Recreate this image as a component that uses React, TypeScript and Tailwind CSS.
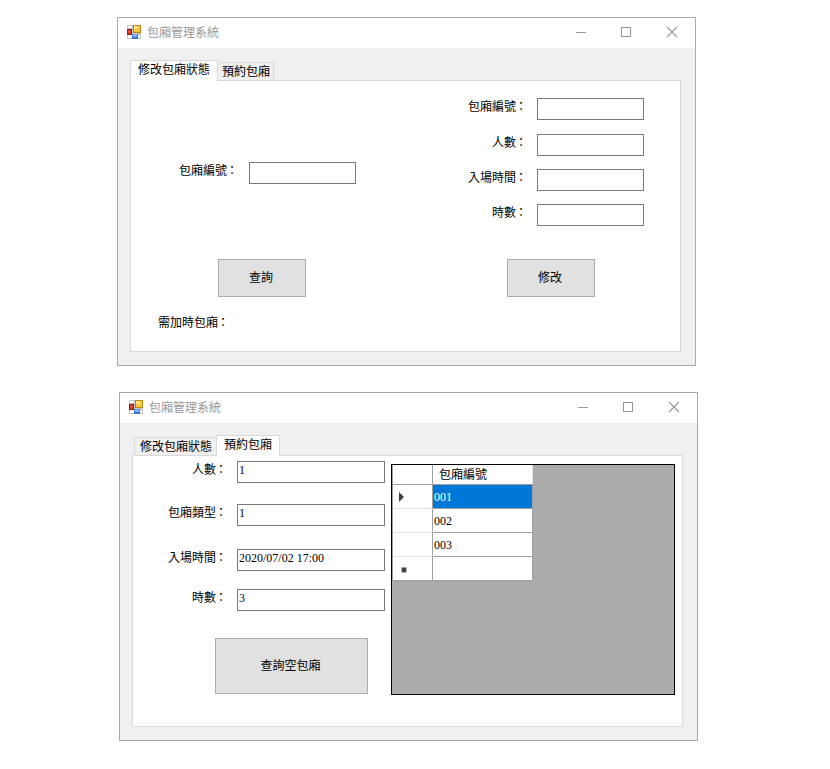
import type { ReactNode } from "react";

function AppIcon() {
  return (
    <svg width="14" height="14" viewBox="0 0 14 14" shapeRendering="crispEdges">
      <rect width="14" height="14" fill="#c4c4c4" />
      <rect x="1" y="1" width="4" height="2" fill="#fff" />
      <rect x="1" y="10" width="4" height="3" fill="#fff" />
      <rect x="11" y="10" width="2" height="3" fill="#fff" />
      <rect x="6" y="0" width="8" height="8" fill="#b9860f" />
      <rect x="7" y="1" width="6" height="6" fill="#f5c73c" />
      <rect x="7" y="1" width="4" height="3" fill="#fde48a" />
      <rect x="0" y="4" width="5" height="6" fill="#a3160e" />
      <rect x="1" y="5" width="3" height="4" fill="#d03a2c" />
      <rect x="2" y="6" width="1" height="1" fill="#f09a8c" />
      <rect x="5" y="9" width="6" height="5" fill="#3f74d4" />
      <rect x="6" y="9" width="4" height="3" fill="#7fb0fa" />
    </svg>
  );
}

function WindowControls() {
  return (
    <svg width="102" height="12" viewBox="0 0 102 12" fill="none" stroke="#999999">
      <path d="M0 6.5h10" />
      <rect x="45.5" y="1.5" width="9" height="9" />
      <path d="M91 1l10 10M101 1l-10 10" strokeWidth="1.1" />
    </svg>
  );
}

function FormWindow({ children }: { children: ReactNode }) {
  return (
    <section className="flex h-[349px] w-[579px] flex-col border border-[#aaaaaa] bg-[#f0f0f0]">
      <header className="flex h-[30px] shrink-0 items-start justify-between bg-white pl-[9px] pr-[17px]">
        <div className="flex gap-1.5 pt-[7px]">
          <AppIcon />
          <h1 className="pt-0.5 text-[12px] leading-[12px] text-[#999999]">包廂管理系統</h1>
        </div>
        <div className="pt-2">
          <WindowControls />
        </div>
      </header>
      <div className="px-3 pt-3">{children}</div>
    </section>
  );
}

function Caption({ children }: { children: string }) {
  return (
    <span className="flex text-[12px] leading-[12px]">
      <span>{children}</span>
      <span className="-ml-px mr-px">：</span>
    </span>
  );
}

function Field({ label, value = "", gap = "gap-[9px]", width }: { label: string; value?: string; gap?: string; width: string }) {
  return (
    <label className={`flex h-[22px] justify-end pt-[3px] ${gap}`}>
      <Caption>{label}</Caption>
      <input
        defaultValue={value}
        className={`-mt-[3px] h-[22px] border border-[#7a7a7a] bg-white pb-1 pl-px text-[12px] leading-[16px] outline-none ${width}`}
      />
    </label>
  );
}

function PushButton({ children, size }: { children: string; size: string }) {
  return (
    <button className={`flex items-center justify-center border border-[#adadad] bg-[#e1e1e1] pr-0.5 text-[12px] leading-[12px] ${size}`}>
      {children}
    </button>
  );
}

function EditWindow() {
  return (
    <FormWindow>
      <nav className="flex h-5 items-end text-[12px] leading-[12px]">
        <div className="relative -mb-px h-[21px] w-[88px] border border-b-0 border-[#d9d9d9] bg-white pl-[7px] pt-[3px]">修改包廂狀態</div>
        <div className="h-[18px] w-14 border border-b-0 border-l-0 border-[#d9d9d9] pl-1 pt-[3px]">預約包廂</div>
      </nav>
      <div className="flex h-[272px] w-[551px] border border-[#d9d9d9] bg-white">
        <div className="w-[225px] pt-[81px]">
          <Field label="包廂編號" gap="gap-2.5" width="w-[107px]" />
          <div className="pl-[87px] pt-[75px]">
            <PushButton size="h-[38px] w-[88px]">查詢</PushButton>
          </div>
          <div className="pl-[27px] pt-5">
            <Caption>需加時包廂</Caption>
          </div>
        </div>
        <div className="w-[288px] pt-[17px]">
          <Field label="包廂編號" width="w-[107px]" />
          <div className="flex flex-col gap-[13px] pt-[14px]">
            <Field label="人數" width="w-[107px]" />
            <Field label="入場時間" width="w-[107px]" />
            <Field label="時數" width="w-[107px]" />
          </div>
          <div className="flex justify-end pr-[49px] pt-[33px]">
            <PushButton size="h-[38px] w-[88px]">修改</PushButton>
          </div>
        </div>
      </div>
    </FormWindow>
  );
}

function RoomGrid() {
  const rooms = ["001", "002", "003", ""];
  return (
    <div className="h-[231px] w-[284px] border border-black bg-[#ababab]">
      <div className="w-[141px] border-l border-[#a0a0a0]">
        <div className="flex h-5 border-b border-[#a0a0a0] bg-white">
          <div className="w-10 border-r border-[#a0a0a0]" />
          <div className="w-[100px] border-r border-[#e5e5e5] pl-1.5 pt-1 text-[12px] leading-[12px]">包廂編號</div>
        </div>
        {rooms.map((room, i) => (
          <div key={i} className="flex h-6">
            <div className={`flex w-10 items-center border-b border-r border-r-[#a0a0a0] bg-white ${i === 3 ? "border-b-[#a0a0a0]" : "border-b-[#e3e3e3]"}`}>
              {i === 0 && (
                <svg className="ml-1.5" width="5" height="10" viewBox="0 0 5 10">
                  <path d="M0 0l5 5-5 5z" fill="#404040" />
                </svg>
              )}
              {i === 3 && (
                <svg className="ml-2 mt-0.5" width="6" height="6" viewBox="0 0 6 6">
                  <rect width="6" height="6" fill="#c4c4c4" />
                  <circle cx="3" cy="3" r="2.4" fill="#404040" />
                </svg>
              )}
            </div>
            <div className={`w-[100px] border-b border-r border-[#a0a0a0] pl-px pt-1 text-[12px] leading-[16px] ${i === 0 ? "bg-[#0078d7] text-white" : "bg-white"}`}>
              {room}
            </div>
          </div>
        ))}
      </div>
    </div>
  );
}

function BookingWindow() {
  return (
    <FormWindow>
      <nav className="flex h-5 items-end pl-0.5 text-[12px] leading-[12px]">
        <div className="h-[18px] w-[82px] border border-b-0 border-r-0 border-[#d9d9d9] pl-[5px] pt-[3px]">修改包廂狀態</div>
        <div className="relative -mb-px h-[21px] w-16 border border-b-0 border-[#d9d9d9] bg-white pl-[7px] pt-[3px]">預約包廂</div>
      </nav>
      <div className="flex h-[272px] w-[551px] border border-[#d9d9d9] bg-white">
        <div className="w-[252px] pt-[5px]">
          <Field label="人數" value="1" width="w-[148px]" />
          <div className="pt-[21px]">
            <Field label="包廂類型" value="1" width="w-[148px]" />
          </div>
          <div className="pt-[23px]">
            <Field label="入場時間" value="2020/07/02 17:00" width="w-[148px]" />
          </div>
          <div className="pt-[18px]">
            <Field label="時數" value="3" width="w-[148px]" />
          </div>
          <div className="pl-[82px] pt-[27px]">
            <PushButton size="h-14 w-[153px]">查詢空包廂</PushButton>
          </div>
        </div>
        <div className="pl-1.5 pt-2">
          <RoomGrid />
        </div>
      </div>
    </FormWindow>
  );
}

export default function App() {
  return (
    <main className="flex h-[769px] w-[830px] flex-col gap-[26px] bg-white pl-[117px] pt-[17px] font-['Liberation_Serif','Noto_Sans_CJK_TC',serif] text-black">
      <EditWindow />
      <div className="pl-0.5">
        <BookingWindow />
      </div>
    </main>
  );
}
